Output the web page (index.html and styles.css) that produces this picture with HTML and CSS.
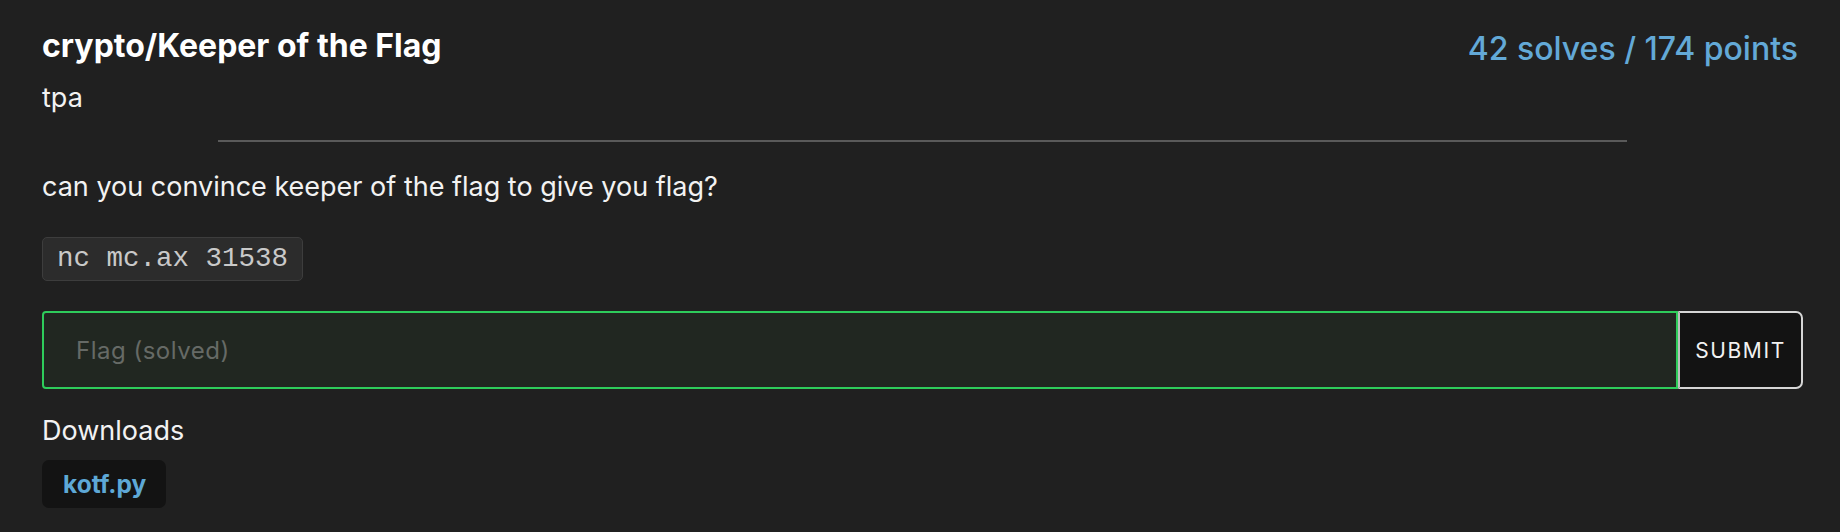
FILE: index.html
```html
<!DOCTYPE html>
<html lang="en">
<head>
<meta charset="utf-8">
<title>crypto/Keeper of the Flag</title>
<link rel="stylesheet" href="styles.css">
</head>
<body>
<main class="card">
  <div class="header">
    <div class="titles">
      <h1 class="title">crypto/Keeper of the Flag</h1>
      <p class="author">tpa</p>
    </div>
    <div class="stats">42 solves / 174 points</div>
  </div>
  <hr class="divider">
  <p class="desc">can you convince keeper of the flag to give you flag?</p>
  <div class="cmd-row"><code class="cmd">nc mc.ax 31538</code></div>
  <form class="flag-form">
    <input class="flag-input" type="text" placeholder="Flag (solved)">
    <button class="submit" type="button">SUBMIT</button>
  </form>
  <h2 class="downloads-title">Downloads</h2>
  <div class="files"><a class="file" href="#">kotf.py</a></div>
</main>
</body>
</html>
```
FILE: styles.css
```css
html, body {
  margin: 0;
  padding: 0;
  background: #202020;
}
body {
  font-family: Inter, "Noto Sans", sans-serif;
  color: #f2f2f2;
  width: 1840px;
  height: 532px;
  overflow: hidden;
}
.card {
  padding: 27px 37px 0 42px;
}
.header {
  display: flex;
  justify-content: space-between;
  align-items: flex-start;
}
.title {
  margin: 0;
  font-size: 32px;
  font-weight: 700;
  line-height: 38px;
  color: #ffffff;
}
.author {
  margin: 17px 0 0;
  font-size: 27px;
  line-height: 32px;
  font-weight: 400;
}
.stats {
  font-size: 32px;
  font-weight: 500;
  line-height: 38px;
  color: #63a9d7;
  margin-top: 3px;
  margin-right: 5px;
}
.divider {
  width: 80%;
  margin: 26px auto 0;
  border: 0;
  height: 2px;
  background: #5a5a5a;
}
.desc {
  margin: 29px 0 0;
  font-size: 27px;
  line-height: 32px;
}
.cmd-row {
  margin-top: 34px;
  display: flex;
}
.cmd {
  font-family: "Liberation Mono", "DejaVu Sans Mono", monospace;
  font-size: 27.5px;
  line-height: 30px;
  color: #c9c9c9;
  background: #2c2c2c;
  border: 1px solid #3d3d3d;
  border-radius: 5px;
  padding: 6px 14px 6px 14px;
}
.flag-form {
  display: flex;
  margin-top: 30px;
  height: 78px;
}
.flag-input {
  flex: 1;
  box-sizing: border-box;
  height: 78px;
  background: #212721;
  border: 2px solid #2ecc5b;
  border-radius: 4px 0 0 4px;
  padding: 0 32px;
  font-family: Inter, "Noto Sans", sans-serif;
  font-size: 24px;
  letter-spacing: 0.5px;
  color: #ffffff;
  outline: none;
}
.flag-input::placeholder {
  color: #666a66;
}
.submit {
  box-sizing: border-box;
  width: 125px;
  height: 78px;
  background: #131313;
  border: 2px solid #d6d6d6;
  border-left-color: #bdbdbd;
  border-radius: 0 7px 7px 0;
  color: #f2f2f2;
  font-family: Inter, "Noto Sans", sans-serif;
  font-size: 21px;
  letter-spacing: 1.6px;
  padding: 0;
}
.downloads-title {
  margin: 26px 0 0;
  font-size: 27px;
  font-weight: 400;
  line-height: 32px;
}
.files {
  display: flex;
  margin-top: 13px;
}
.file {
  display: block;
  background: #131313;
  border-radius: 7px;
  padding: 9px 20px 9px 21px;
  font-size: 24.5px;
  line-height: 30px;
  font-weight: 700;
  color: #5ea8d6;
  text-decoration: none;
}
```
